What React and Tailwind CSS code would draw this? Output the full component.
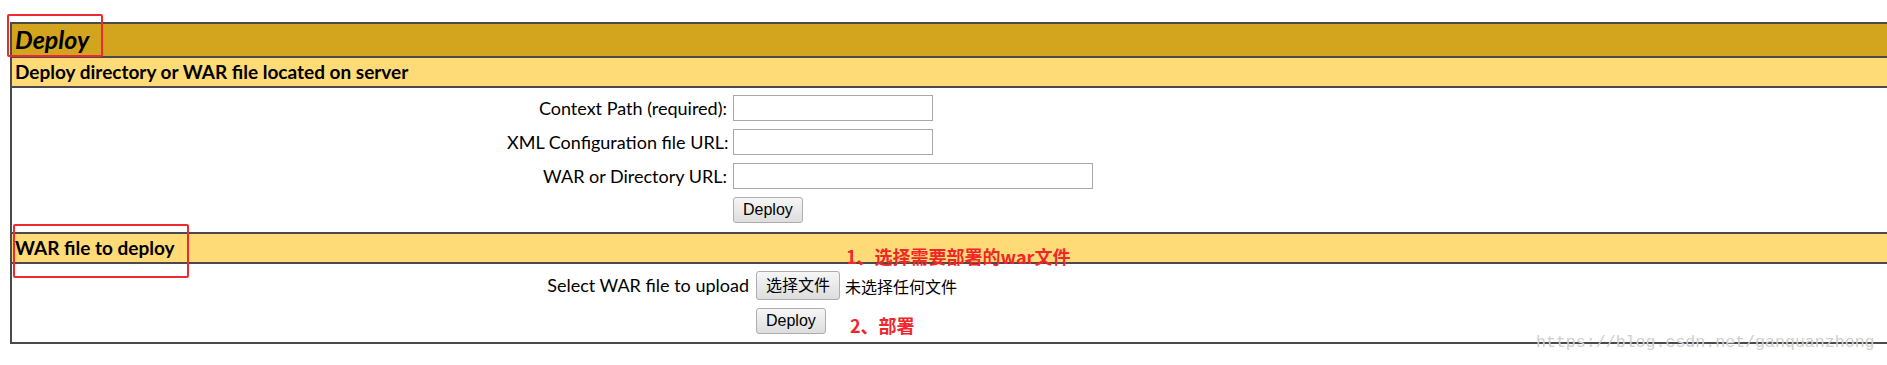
import React from "react";

const sans = { fontFamily: "Lato, 'Noto Sans CJK SC', sans-serif" };
const cjk = { fontFamily: "'Noto Sans CJK SC', sans-serif" };

function Btn({ children, className = "" }) {
  return (
    <button
      className={`shrink-0 rounded-[3px] border border-[#adadad] bg-gradient-to-b from-[#f6f6f6] to-[#dddddd] px-[9px] text-[16px] text-black ${className}`}
      style={{ fontFamily: "'Liberation Sans', 'Noto Sans CJK SC', sans-serif" }}
    >
      {children}
    </button>
  );
}

function Field({ label, w }) {
  return (
    <div className="flex h-[26px] items-center">
      <span className="w-[220px] shrink-0 whitespace-nowrap text-right text-[18px] text-black">{label}</span>
      <input className={`ml-[6px] h-[26px] shrink-0 ${w} border border-[#a9a9a9] bg-white`} />
    </div>
  );
}

export default function App() {
  return (
    <div className="relative h-[365px] w-[1887px] overflow-hidden bg-white" style={sans}>
      <div className="ml-[10px] mt-[22px] w-[1900px] border-y-2 border-l-2 border-[#4a4a4a]">
        <div className="flex h-[32px] items-center bg-[#d3a51f] pl-[3px]">
          <span className="text-[25px] font-bold italic text-black">Deploy</span>
        </div>
        <div className="flex h-[30px] items-center border-t-2 border-[#4a4a4a] bg-[#ffdb78] pl-[3px]">
          <span className="text-[19px] font-bold text-black">Deploy directory or WAR file located on server</span>
        </div>
        <div className="flex flex-col gap-[8px] border-t-2 border-[#4a4a4a] pb-[9px] pl-[495px] pt-[7px]">
          <Field label="Context Path (required):" w="w-[200px]" />
          <Field label="XML Configuration file URL:" w="w-[200px]" />
          <Field label="WAR or Directory URL:" w="w-[360px]" />
          <div className="pl-[226px]">
            <Btn className="h-[26px]">Deploy</Btn>
          </div>
        </div>
        <div className="flex h-[30px] items-center border-t-2 border-[#4a4a4a] bg-[#ffdb78] pl-[3px]">
          <span className="text-[19px] font-bold text-black">WAR file to deploy</span>
        </div>
        <div className="flex flex-col gap-[8px] border-t-2 border-[#4a4a4a] pb-[8px] pl-[517px] pt-[7px]">
          <div className="flex h-[29px] items-center">
            <span className="w-[220px] shrink-0 whitespace-nowrap text-right text-[18px] text-black">
              Select WAR file to upload
            </span>
            <Btn className="ml-[7px] h-[29px]">选择文件</Btn>
            <span className="ml-[5px] whitespace-nowrap text-[16px] text-black" style={cjk}>
              未选择任何文件
            </span>
          </div>
          <div className="flex h-[26px] items-center pl-[227px]">
            <Btn className="h-[26px]">Deploy</Btn>
          </div>
        </div>
      </div>

      {/* annotations drawn over the screenshot */}
      <span
        className="pointer-events-none absolute left-[846px] top-[245px] whitespace-nowrap text-[18px] font-bold leading-[22px] text-[#f0262b]"
        style={cjk}
      >
        1、选择需要部署的war文件
      </span>
      <span
        className="pointer-events-none absolute left-[850px] top-[314px] whitespace-nowrap text-[18px] font-bold leading-[22px] text-[#f0262b]"
        style={cjk}
      >
        2、部署
      </span>
      <div className="pointer-events-none absolute left-[7px] top-[14px] h-[43px] w-[96px] rounded-[2px] border-2 border-[#ec2a30]" />
      <div className="pointer-events-none absolute left-[13px] top-[224px] h-[54px] w-[176px] rounded-[2px] border-2 border-[#ec2a30]" />
      <span
        className="pointer-events-none absolute left-[1536px] top-[333px] whitespace-nowrap text-[16.6px] leading-[20px] text-[#cfcfcf]"
        style={{ fontFamily: "'Liberation Mono', monospace" }}
      >
        https://blog.csdn.net/ganquanzhong
      </span>
    </div>
  );
}
